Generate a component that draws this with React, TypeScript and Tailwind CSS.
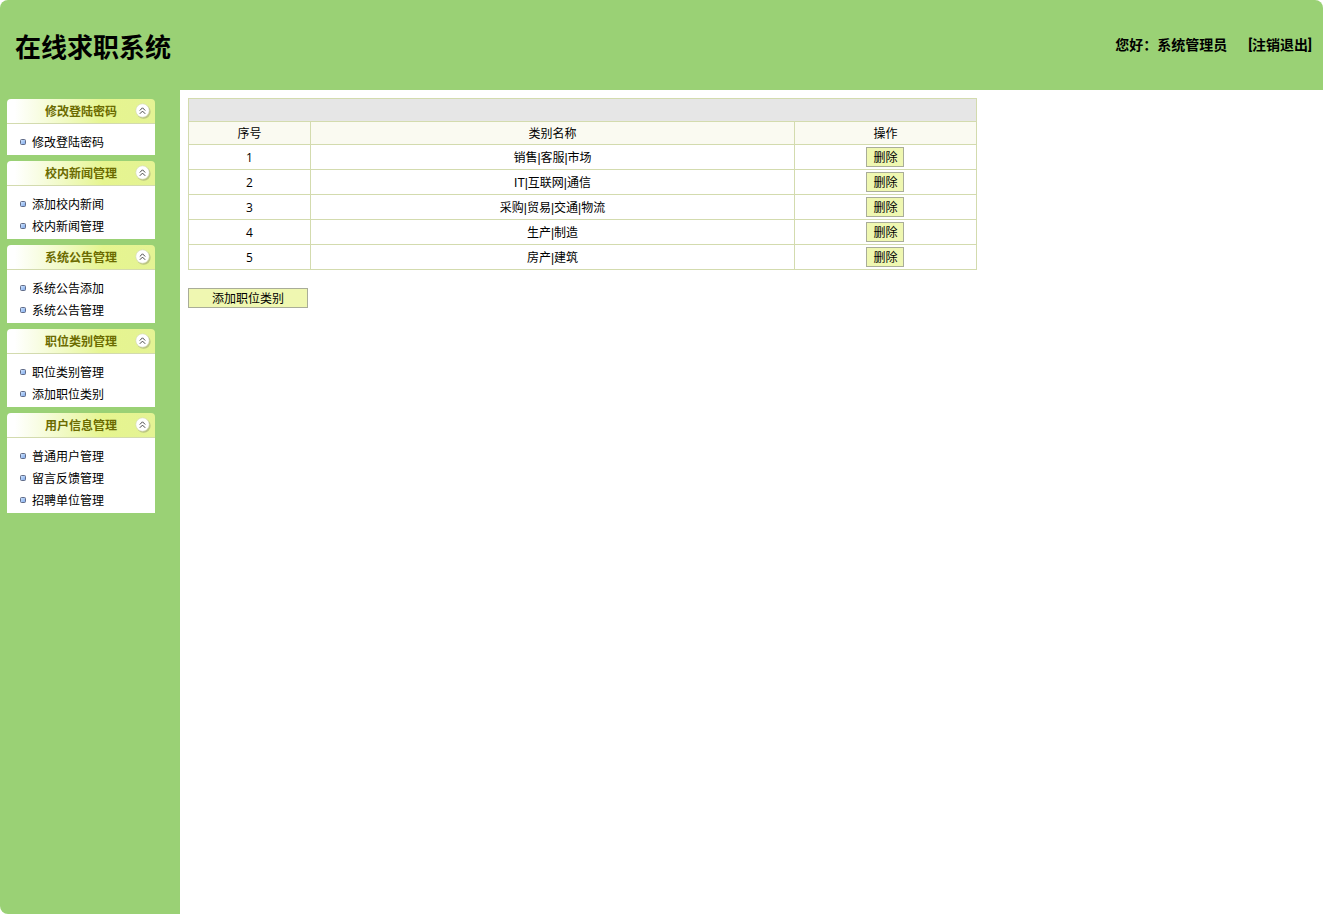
const menus = [
    { title: '修改登陆密码', items: ['修改登陆密码'] },
    { title: '校内新闻管理', items: ['添加校内新闻', '校内新闻管理'] },
    { title: '系统公告管理', items: ['系统公告添加', '系统公告管理'] },
    { title: '职位类别管理', items: ['职位类别管理', '添加职位类别'] },
    { title: '用户信息管理', items: ['普通用户管理', '留言反馈管理', '招聘单位管理'] },
];

const categories = ['销售|客服|市场', 'IT|互联网|通信', '采购|贸易|交通|物流', '生产|制造', '房产|建筑'];

const CollapseIcon = () => (
    <svg width="16" height="16" viewBox="0 0 16 16">
        <circle cx="8.6" cy="8.8" r="7" fill="#a9b07a" opacity="0.7" />
        <circle cx="7.5" cy="7.5" r="6.7" fill="#fff" stroke="#d3d8b4" strokeWidth="0.6" />
        <path d="M4.8 7.5L7.5 4.8L10.2 7.5M4.8 10.8L7.5 8.1L10.2 10.8" fill="none" stroke="#333" strokeWidth="0.9" />
    </svg>
);

const Bullet = () => (
    <svg width="6" height="6" viewBox="0 0 6 6">
        <defs>
            <linearGradient id="bullet" x1="0" y1="0" x2="1" y2="1">
                <stop offset="0" stopColor="#d4e8ff" />
                <stop offset="1" stopColor="#7ba6ea" />
            </linearGradient>
        </defs>
        <rect x="0.5" y="0.5" width="5" height="5" rx="1" fill="url(#bullet)" stroke="#626d88" />
    </svg>
);

const MenuGroup = ({ title, items }: { title: string; items: string[] }) => {
    return (
        <section>
            <h2>
                <button
                    type="button"
                    className="flex h-[25px] w-full items-center justify-end gap-[18px] rounded-t border-b border-[#d3dbae] bg-linear-to-r from-white from-5% via-[#e6f58f] via-65% to-[#e4f394] pr-1 font-bold text-[#6b6b00]"
                >
                    {title}
                    <CollapseIcon />
                </button>
            </h2>
            <ul className="bg-white pt-[7px] pb-[2px]">
                {items.map((item) => (
                    <li key={item} className="flex h-[22px] items-center gap-[6px] pl-[13px]">
                        <Bullet />
                        <a href="#">{item}</a>
                    </li>
                ))}
            </ul>
        </section>
    );
};

const App = () => {
    return (
        <div className="flex min-h-screen flex-col bg-white font-['Noto_Sans_CJK_SC',sans-serif] text-[12px] leading-[18px] text-black">
            <header className="flex h-[90px] items-center justify-between rounded-t-lg bg-[#9ad175] pr-[11px] pl-[15px]">
                <h1 className="pt-[2px] text-[26px] leading-8 font-bold">在线求职系统</h1>
                <div className="flex gap-[21px] font-['Roboto','Noto_Sans_CJK_SC',sans-serif] text-[14px] font-bold">
                    <span>您好：系统管理员</span>
                    <a href="#">[注销退出]</a>
                </div>
            </header>
            <div className="flex grow">
                <nav className="flex w-[180px] shrink-0 flex-col gap-[6px] rounded-bl-lg bg-[#9ad175] pt-[9px] pr-[25px] pl-[7px]">
                    {menus.map((menu) => (
                        <MenuGroup key={menu.title} title={menu.title} items={menu.items} />
                    ))}
                </nav>
                <main className="grow p-2">
                    <table className="w-[70%] table-fixed border-collapse text-center [&_td]:border [&_td]:border-[#d3dbae] [&_td]:p-0 [&_th]:border [&_th]:border-[#d3dbae] [&_th]:p-0 [&_th]:font-normal">
                        <colgroup>
                            <col className="w-[15.5%]" />
                            <col />
                            <col className="w-[23.1%]" />
                        </colgroup>
                        <thead>
                            <tr className="h-[23px] bg-[#e6e6e6]">
                                <td colSpan={3}></td>
                            </tr>
                            <tr className="h-[23px] bg-[#fafaf1]">
                                <th>序号</th>
                                <th>类别名称</th>
                                <th>操作</th>
                            </tr>
                        </thead>
                        <tbody>
                            {categories.map((name, index) => (
                                <tr key={name} className="h-[25px]">
                                    <td>
                                        <span className="font-['Open_Sans',sans-serif]">{index + 1}</span>
                                    </td>
                                    <td>
                                        <span className="font-['Liberation_Sans','Noto_Sans_CJK_SC',sans-serif]">
                                            {name}
                                        </span>
                                    </td>
                                    <td>
                                        <button
                                            type="button"
                                            className="mx-auto block h-5 w-[38px] border border-[#a9ad98] bg-[#eff7b1]"
                                        >
                                            删除
                                        </button>
                                    </td>
                                </tr>
                            ))}
                        </tbody>
                    </table>
                    <button type="button" className="mt-[18px] h-5 w-[120px] border border-[#a9ad98] bg-[#eff7b1]">
                        添加职位类别
                    </button>
                </main>
            </div>
        </div>
    );
};

export default App;
